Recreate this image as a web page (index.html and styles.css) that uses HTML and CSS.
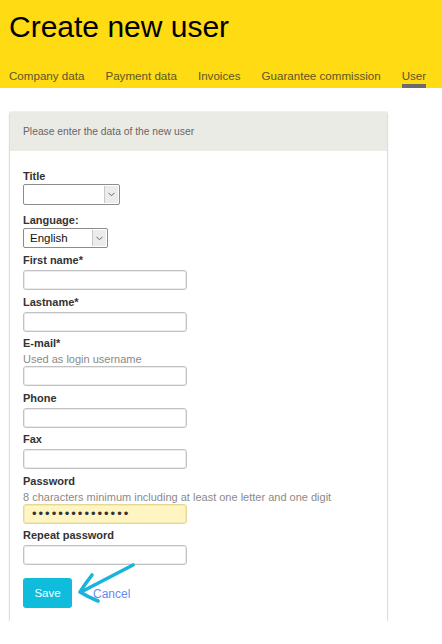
FILE: index.html
```html
<!DOCTYPE html>
<html lang="en">
<head>
<meta charset="utf-8">
<title>Create new user</title>
<link rel="stylesheet" href="styles.css">
</head>
<body>
<header class="topbar">
  <h1 class="page-title">Create new user</h1>
  <nav class="tabs">
    <a class="tab" href="#">Company data</a>
    <a class="tab" href="#">Payment data</a>
    <a class="tab" href="#">Invoices</a>
    <a class="tab" href="#">Guarantee commission</a>
    <a class="tab tab-active" href="#">User</a>
  </nav>
</header>
<main class="content">
  <section class="panel">
    <div class="panel-head">Please enter the data of the new user</div>
    <form class="panel-body">
      <div class="field field-title">
        <label class="label label-tight">Title</label>
        <div class="select select-title">
          <span class="select-value"></span>
          <span class="select-btn"><svg class="chev" width="7" height="5" viewBox="0 0 7 5"><path d="M0.5 0.8 L3.5 3.8 L6.5 0.8" fill="none" stroke="#666" stroke-width="1"/></svg></span>
        </div>
      </div>
      <div class="field field-lang">
        <label class="label label-tight">Language:</label>
        <div class="select select-lang">
          <span class="select-value">English</span>
          <span class="select-btn"><svg class="chev" width="7" height="5" viewBox="0 0 7 5"><path d="M0.5 0.8 L3.5 3.8 L6.5 0.8" fill="none" stroke="#666" stroke-width="1"/></svg></span>
        </div>
      </div>
      <div class="field">
        <label class="label">First name*</label>
        <input class="input" type="text">
      </div>
      <div class="field">
        <label class="label">Lastname*</label>
        <input class="input" type="text">
      </div>
      <div class="field">
        <label class="label">E-mail*</label>
        <div class="hint">Used as login username</div>
        <input class="input" type="text">
      </div>
      <div class="field">
        <label class="label">Phone</label>
        <input class="input" type="text">
      </div>
      <div class="field">
        <label class="label">Fax</label>
        <input class="input" type="text">
      </div>
      <div class="field">
        <label class="label">Password</label>
        <div class="hint">8 characters minimum including at least one letter and one digit</div>
        <input class="input input-pass" type="password" value="abcdefghijklmno">
      </div>
      <div class="field">
        <label class="label">Repeat password</label>
        <input class="input" type="password">
      </div>
      <div class="actions">
        <button class="btn-save" type="button">Save</button>
        <a class="cancel" href="#">Cancel</a>
        <svg class="pointer-arrow" width="70" height="50" viewBox="0 0 70 50">
          <path d="M60 7 Q37 19 8 34" fill="none" stroke="#19b4de" stroke-width="3.6" stroke-linecap="round"/>
          <path d="M19 17 Q12 26 7 34 Q15 39 25 43" fill="none" stroke="#19b4de" stroke-width="3.6" stroke-linecap="round" stroke-linejoin="round"/>
        </svg>
      </div>
    </form>
  </section>
</main>
</body>
</html>
```
FILE: styles.css
```css
* { box-sizing: border-box; }

body {
  margin: 0;
  background: #ffffff;
  font-family: "Liberation Sans", Arial, sans-serif;
  color: #333;
}

.topbar {
  background: #fedb12;
  height: 88px;
  padding-left: 9px;
}

.page-title {
  margin: 0;
  padding-top: 9px;
  font-size: 30px;
  line-height: 36px;
  font-weight: normal;
  color: #000;
}

.tabs {
  display: flex;
  gap: 21px;
  margin-top: 23px;
}

.tab {
  display: block;
  font-size: 11.6px;
  line-height: 16px;
  color: #5c5628;
  text-decoration: none;
  border-bottom: 4px solid transparent;
}

.tab-active {
  border-bottom-color: #6b6b6b;
}

.content {
  padding: 24px 0 0 10px;
}

.panel {
  width: 377px;
  background: #fff;
  box-shadow: 0 1px 2px rgba(0, 0, 0, 0.28), 0 0 0 1px rgba(0, 0, 0, 0.04);
}

.panel-head {
  height: 39px;
  line-height: 39px;
  padding-left: 13px;
  background: #ebebe6;
  font-size: 10.3px;
  color: #666;
}

.panel-body {
  padding: 18px 13px 13px;
}

.field {
  margin-bottom: 4.5px;
}

.field-title { margin-bottom: 8px; }
.field-lang { margin-bottom: 5px; }

.label {
  display: block;
  font-size: 11px;
  font-weight: bold;
  line-height: 15px;
  margin-bottom: 2px;
  color: #333;
}

.label-tight { margin-bottom: 0; }

.hint {
  font-size: 11px;
  line-height: 12px;
  margin-bottom: 1px;
  color: #8a8a8a;
  white-space: nowrap;
}

.input {
  display: block;
  width: 164px;
  height: 20px;
  margin: 0;
  padding: 0 8px;
  border: 1px solid #c2c2c2;
  border-radius: 3px;
  box-shadow: inset 0 0 0 1px #ebebeb;
  background: #fff;
  font-family: "Liberation Sans", Arial, sans-serif;
  font-size: 11px;
  outline: none;
}

.input-pass {
  background: #fff5c3;
  border-color: #e6d894;
  box-shadow: inset 0 0 0 1px #f5e9b0;
  color: #333;
  font-size: 13px;
  letter-spacing: 2px;
}

.select {
  display: flex;
  align-items: stretch;
  height: 20px;
  border: 1px solid #8c8c8c;
  border-radius: 2px;
  background: #fff;
  padding: 1px;
}

.select-title { width: 97px; height: 21px; }
.select-lang { width: 85px; }

.select-value {
  flex: 1;
  padding-left: 5px;
  font-size: 11.5px;
  line-height: 16px;
  color: #111;
}

.select-btn {
  width: 14px;
  display: flex;
  align-items: center;
  justify-content: center;
  background: #ececec;
  border-left: 1px solid #c8c8c8;
}

.chev { display: block; }

.actions {
  position: relative;
  display: flex;
  align-items: center;
  margin-top: 13px;
}

.btn-save {
  width: 49px;
  height: 30px;
  border: none;
  border-radius: 3px;
  background: #10bcdc;
  color: #fff;
  font-family: "Liberation Sans", Arial, sans-serif;
  font-size: 11.5px;
  padding: 0;
}

.cancel {
  margin-left: 21px;
  font-size: 12px;
  color: #6b88f2;
  text-decoration: none;
  padding-top: 1px;
}

.pointer-arrow {
  position: absolute;
  left: 50px;
  top: -20px;
}
```
